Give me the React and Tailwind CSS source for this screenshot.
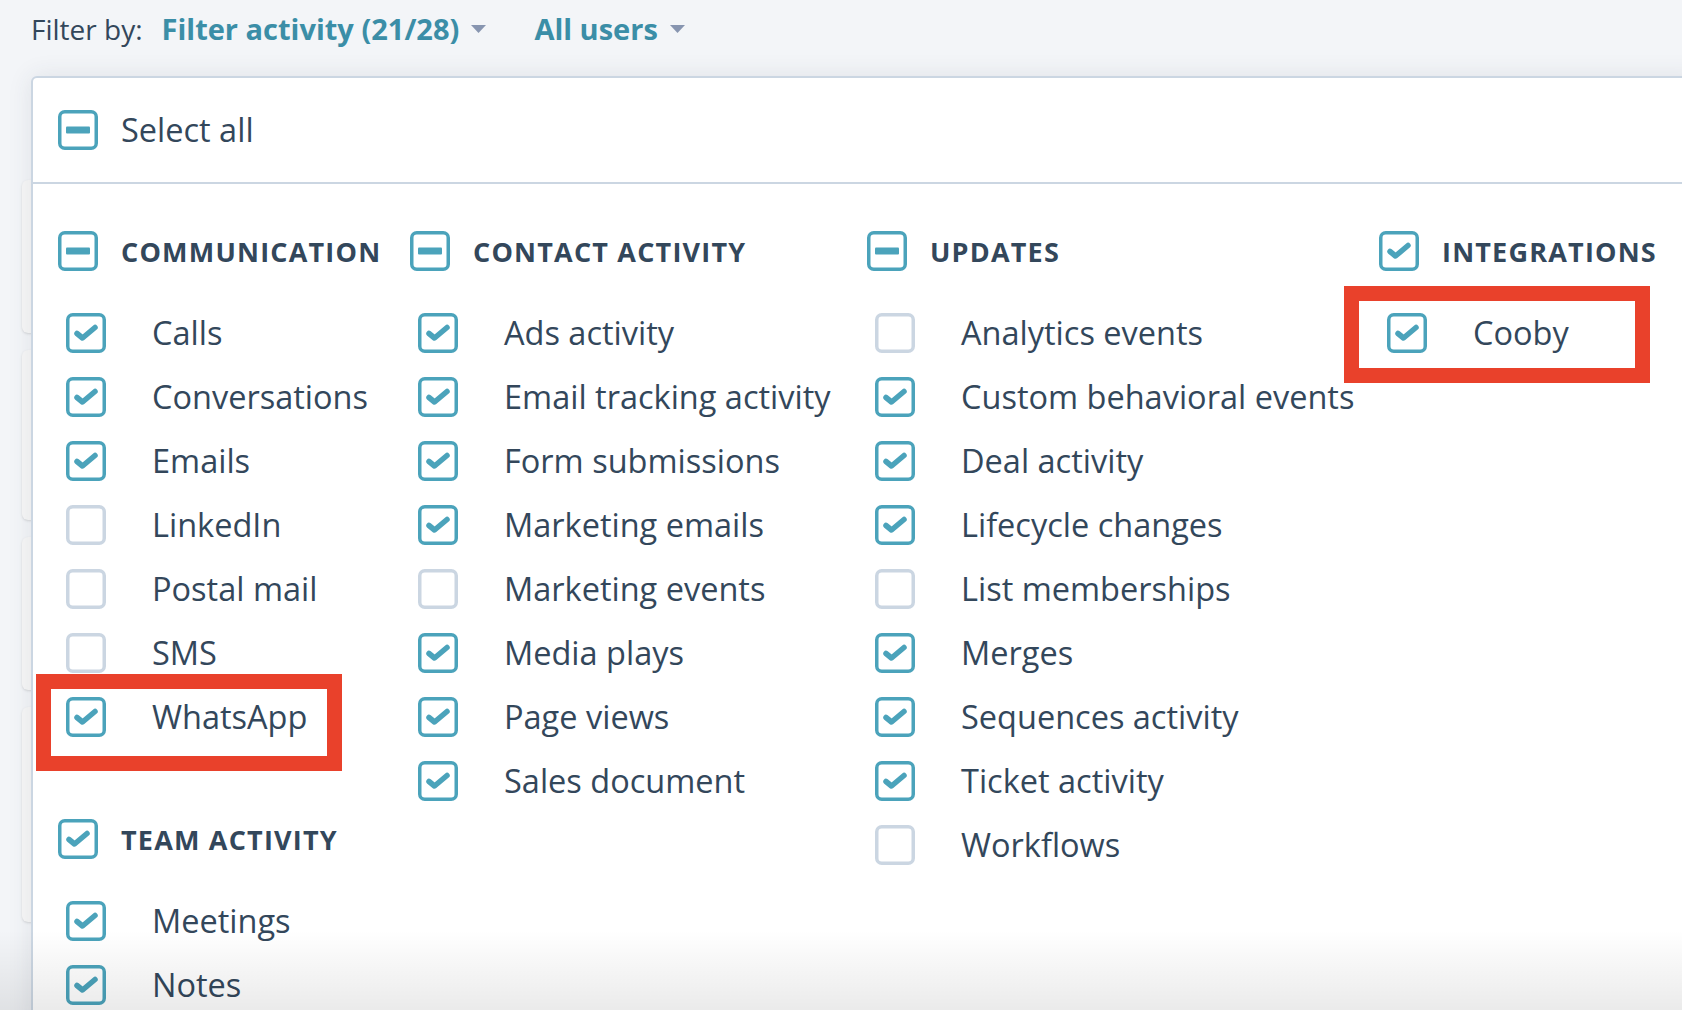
import React from "react"

const TEAL = "#4ba3bb"

// Checkbox drawn as svg: checked, unchecked, or indeterminate (minus)
function Box({ state }) {
  if (state === "off") {
    return (
      <svg width="40" height="40" viewBox="0 0 40 40" className="shrink-0">
        <rect x="1.75" y="1.75" width="36.5" height="36.5" rx="5" fill="white" stroke="#cbd6e2" strokeWidth="3.5" />
      </svg>
    )
  }
  return (
    <svg width="40" height="40" viewBox="0 0 40 40" className="shrink-0">
      <rect x="1.75" y="1.75" width="36.5" height="36.5" rx="5" fill="white" stroke={TEAL} strokeWidth="3.5" />
      {state === "mixed" ? (
        <rect x="8" y="16.5" width="24" height="7" rx="1" fill={TEAL} />
      ) : (
        <path
          d="M11 20.5 L16.5 25 L29 14.5"
          fill="none"
          stroke={TEAL}
          strokeWidth="5.5"
          strokeLinecap="round"
          strokeLinejoin="round"
        />
      )}
    </svg>
  )
}

function Caret() {
  return (
    <svg width="15" height="8" viewBox="0 0 15 8" className="shrink-0">
      <path d="M0 0 H15 L7.5 8 Z" fill="#8795b0" />
    </svg>
  )
}

function Header({ state, label }) {
  return (
    <div className="flex h-[40px] items-center gap-[23px]">
      <Box state={state} />
      <span className="text-[27px] font-bold uppercase leading-none tracking-[1.2px] text-[#33475b] whitespace-nowrap">
        {label}
      </span>
    </div>
  )
}

function Row({ on, label, mark }) {
  return (
    <div className="relative flex h-[64px] items-center gap-[46px] pl-[8px]">
      {mark && <div className={`pointer-events-none absolute border-[15px] border-[#e9412b] ${mark}`} />}
      <Box state={on ? "on" : "off"} />
      <span className="text-[32.5px] text-[#33475b] whitespace-nowrap">{label}</span>
    </div>
  )
}

function Section({ state, label, items, className = "" }) {
  return (
    <div className={className}>
      <Header state={state} label={label} />
      <div className="mt-[30px]">
        {items.map((it) => (
          <Row key={it[0]} label={it[0]} on={it[1]} mark={it[2]} />
        ))}
      </div>
    </div>
  )
}

const communication = [
  ["Calls", true],
  ["Conversations", true],
  ["Emails", true],
  ["LinkedIn", false],
  ["Postal mail", false],
  ["SMS", false],
  ["WhatsApp", true, "-left-[22px] -top-[11px] h-[97px] w-[306px]"],
]

const team = [
  ["Meetings", true],
  ["Notes", true],
]

const contact = [
  ["Ads activity", true],
  ["Email tracking activity", true],
  ["Form submissions", true],
  ["Marketing emails", true],
  ["Marketing events", false],
  ["Media plays", true],
  ["Page views", true],
  ["Sales document", true],
]

const updates = [
  ["Analytics events", false],
  ["Custom behavioral events", true],
  ["Deal activity", true],
  ["Lifecycle changes", true],
  ["List memberships", false],
  ["Merges", true],
  ["Sequences activity", true],
  ["Ticket activity", true],
  ["Workflows", false],
]

const integrations = [["Cooby", true, "-left-[35px] -top-[15px] h-[97px] w-[306px]"]]

export default function App() {
  return (
    <div className="relative h-[1010px] w-[1682px] overflow-hidden bg-[#f3f5f8] font-['Open_Sans',sans-serif]">
      {/* filter bar */}
      <div className="flex h-[58px] items-center pl-[31px]">
        <span className="text-[28px] text-[#33475b]">Filter by:</span>
        <span className="ml-[19px] text-[29px] font-bold text-[#3b8ea7]">Filter activity (21/28)</span>
        <span className="ml-[12px]">
          <Caret />
        </span>
        <span className="ml-[48px] text-[29px] font-bold text-[#3b8ea7]">All users</span>
        <span className="ml-[12px]">
          <Caret />
        </span>
      </div>

      {/* page cards behind the dropdown */}
      <div className="ml-[22px] mt-[122px] flex w-[300px] flex-col gap-[17px]">
        <div className="h-[153px] rounded-md bg-[#f7f7f7] shadow-sm" />
        <div className="h-[170px] rounded-md bg-[#f7f7f7] shadow-sm" />
        <div className="h-[153px] rounded-md bg-[#f7f7f7] shadow-sm" />
        <div className="h-[215px] rounded-md bg-[#f7f7f7] shadow-sm" />
      </div>

      {/* dropdown panel */}
      <div className="absolute left-[31px] top-[76px] -right-[20px] -bottom-[20px] rounded-tl-md border-2 border-[#cbd6e2] bg-white shadow-[0_0_24px_rgba(45,62,80,0.10)]">
        <div className="flex h-[106px] items-center gap-[23px] border-b-2 border-[#cbd6e2] pl-[25px]">
          <Box state="mixed" />
          <span className="text-[32.5px] text-[#33475b]">Select all</span>
        </div>

        <div className="grid grid-cols-[352px_457px_512px_1fr] pl-[25px] pt-[47px]">
          <div>
            <Section state="mixed" label="Communication" items={communication} />
            <Section state="on" label="Team activity" items={team} className="mt-[70px]" />
          </div>
          <Section state="mixed" label="Contact activity" items={contact} />
          <Section state="mixed" label="Updates" items={updates} />
          <Section state="on" label="Integrations" items={integrations} />
        </div>
      </div>

      {/* bottom fade */}
      <div className="pointer-events-none absolute inset-x-0 bottom-0 h-[80px] bg-gradient-to-b from-transparent to-black/[0.08]" />
    </div>
  )
}
